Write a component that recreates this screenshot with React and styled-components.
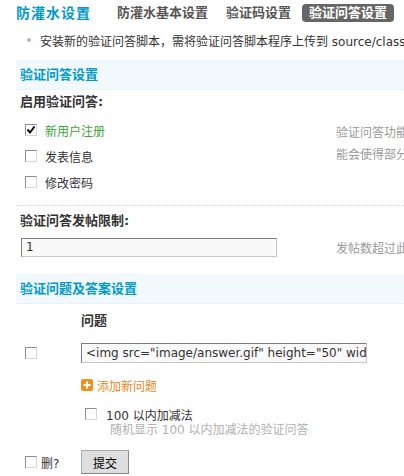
import React from 'react';
import styled, { createGlobalStyle } from 'styled-components';

const Global = createGlobalStyle`
  html, body { margin: 0; padding: 0; background: #fff; }
  body {
    width: 404px;
    height: 476px;
    overflow: hidden;
    font-family: "DejaVu Sans", "Noto Sans CJK SC", sans-serif;
    font-size: 12px;
    color: #333;
  }
  * { box-sizing: border-box; }
`;

const Page = styled.div`
  width: 760px;
  padding-left: 16px;
`;

const TopBar = styled.div`
  display: flex;
  align-items: center;
  height: 25px;
`;

const Title = styled.h3`
  margin: 0 19px 0 0;
  font-size: 14px;
  font-weight: bold;
  line-height: 18px;
  letter-spacing: 1px;
  color: #0099cc;
  white-space: nowrap;
`;

const Tabs = styled.ul`
  display: flex;
  margin: 0;
  padding: 0;
  list-style: none;
`;

const Tab = styled.li`
  padding: 0 7px;
  margin-right: 4px;
  border-radius: 4px;
  font-size: 13px;
  font-weight: bold;
  line-height: 18px;
  white-space: nowrap;
  color: ${(p) => (p.$active ? '#fff' : '#555')};
  background: ${(p) => (p.$active ? '#666' : 'transparent')};
`;

const Tip = styled.div`
  display: flex;
  align-items: center;
  height: 16px;
  margin-top: 7px;
  padding-left: 11px;
  white-space: nowrap;
  color: #333;
`;

const Bullet = styled.span`
  width: 4px;
  height: 4px;
  border-radius: 50%;
  background: #bbb;
  margin-right: 9px;
  flex: none;
`;

const Partition = styled.div`
  margin-top: ${(p) => p.$mt}px;
  height: 30px;
  line-height: 29px;
  padding-left: 4px;
  background: #f2f9fd;
  border-bottom: 1px dotted #deeffb;
  font-size: 13px;
  font-weight: bold;
  color: #0099cc;
`;

const Label = styled.div`
  height: ${(p) => p.$h}px;
  line-height: ${(p) => p.$h}px;
  padding-left: 4px;
  font-size: 13px;
  font-weight: bold;
  color: #333;
  border-top: ${(p) => (p.$line ? '1px dotted #d6d6d6' : 'none')};
`;

const FieldRow = styled.div`
  display: flex;
  padding-bottom: ${(p) => p.$pb || 0}px;
`;

const FieldMain = styled.div`
  width: 320px;
  flex: none;
  padding-top: ${(p) => p.$pt || 0}px;
  padding-bottom: ${(p) => p.$pb || 0}px;
  padding-left: ${(p) => p.$pl || 0}px;
`;

const Tips = styled.div`
  width: ${(p) => p.$w}px;
  flex: none;
  padding-top: ${(p) => p.$pt || 0}px;
  line-height: 22px;
  color: #999;
`;

const CheckItem = styled.label`
  display: flex;
  align-items: center;
  gap: 8px;
  height: 26px;
  padding-left: 9px;
  color: ${(p) => (p.$on ? '#3aa53a' : '#333')};
`;

const Box = styled.span`
  display: inline-flex;
  align-items: center;
  justify-content: center;
  flex: none;
  width: 12px;
  height: 12px;
  border: 1px solid;
  border-color: #8c8c8c #d6d6d6 #d6d6d6 #8c8c8c;
  background: #fff;
`;

const TextInput = styled.div`
  width: ${(p) => p.$w}px;
  height: ${(p) => p.$h}px;
  line-height: ${(p) => p.$h - 2}px;
  padding-left: 4px;
  border: 1px solid;
  border-color: #7c7c7c #c6c6c6 #c6c6c6 #7c7c7c;
  background: #f9f9f9;
  color: #333;
  white-space: nowrap;
  overflow: hidden;
  font-family: "DejaVu Sans", sans-serif;
`;

const QHead = styled.div`
  height: 34px;
  line-height: 34px;
  padding-left: 65px;
  font-size: 13px;
  font-weight: bold;
  color: #333;
`;

const QRow = styled.div`
  display: flex;
  align-items: center;
  height: 30px;
  padding-left: 9px;
  gap: 44px;
`;

const AddRow = styled.div`
  display: flex;
  align-items: center;
  gap: 4px;
  height: 24px;
  margin-top: 5px;
  padding-left: 65px;
  color: #e8891d;
`;

const AddIcon = styled.span`
  display: inline-flex;
  align-items: center;
  justify-content: center;
  width: 12px;
  height: 12px;
  border-radius: 2px;
  background: #f0901f;
`;

const Preset = styled.div`
  margin-top: 9px;
  padding-left: 69px;
`;

const PresetItem = styled.div`
  display: flex;
  align-items: center;
  gap: 9px;
  height: 16px;
  color: #333;
`;

const PresetDesc = styled.div`
  height: 17px;
  line-height: 17px;
  padding-left: 25px;
  color: #b0b0b0;
`;

const Footer = styled.div`
  display: flex;
  align-items: center;
  height: 24px;
  margin-top: 11px;
  padding-left: 9px;
`;

const DelGroup = styled.label`
  display: flex;
  align-items: center;
  gap: 4px;
  width: 56px;
  color: #333;
`;

const Button = styled.button`
  width: 48px;
  height: 24px;
  padding: 0;
  border: 1px solid;
  border-color: #aaa #888 #888 #aaa;
  background: #dedede;
  font-family: "DejaVu Sans", "Noto Sans CJK SC", sans-serif;
  font-size: 12px;
  color: #000;
`;

function Check({ on }) {
  return (
    <Box>
      {on && (
        <svg width="10" height="10" viewBox="0 0 10 10">
          <path d="M1.5 4.5 L4 7.5 L8.5 1.5" fill="none" stroke="#000" strokeWidth="2" />
        </svg>
      )}
    </Box>
  );
}

export default function App() {
  return (
    <>
      <Global />
      <Page>
        <TopBar>
          <Title>防灌水设置</Title>
          <Tabs>
            <Tab>防灌水基本设置</Tab>
            <Tab>验证码设置</Tab>
            <Tab $active>验证问答设置</Tab>
            <Tab>注册设置</Tab>
          </Tabs>
        </TopBar>

        <Tip>
          <Bullet />
          安装新的验证问答脚本，需将验证问答脚本程序上传到 source/class/secqaa/ 目录
        </Tip>

        <Partition $mt={12}>验证问答设置</Partition>

        <Label $h={24}>启用验证问答:</Label>
        <FieldRow>
          <FieldMain $pt={3} $pb={10}>
            <CheckItem $on>
              <Check on />
              新用户注册
            </CheckItem>
            <CheckItem>
              <Check />
              发表信息
            </CheckItem>
            <CheckItem>
              <Check />
              修改密码
            </CheckItem>
          </FieldMain>
          <Tips $w={86} $pt={8}>验证问答功能可能会使得部分</Tips>
        </FieldRow>

        <Label $h={29} $line>验证问答发帖限制:</Label>
        <FieldRow $pb={14}>
          <FieldMain $pt={4} $pl={5}>
            <TextInput $w={256} $h={19}>1</TextInput>
          </FieldMain>
          <Tips $w={86} $pt={4}>发帖数超过此</Tips>
        </FieldRow>

        <Partition $mt={0}>验证问题及答案设置</Partition>

        <QHead>问题</QHead>
        <QRow>
          <Check />
          <TextInput $w={286} $h={20}>&lt;img src="image/answer.gif" height="50" width="200" /&gt;</TextInput>
        </QRow>
        <AddRow>
          <AddIcon>
            <svg width="8" height="8" viewBox="0 0 8 8">
              <path d="M4 0.5 V7.5 M0.5 4 H7.5" stroke="#fff" strokeWidth="2" />
            </svg>
          </AddIcon>
          添加新问题
        </AddRow>

        <Preset>
          <PresetItem>
            <Check />
            100 以内加减法
          </PresetItem>
          <PresetDesc>随机显示 100 以内加减法的验证问答</PresetDesc>
        </Preset>

        <Footer>
          <DelGroup>
            <Check />
            删?
          </DelGroup>
          <Button>提交</Button>
        </Footer>
      </Page>
    </>
  );
}
